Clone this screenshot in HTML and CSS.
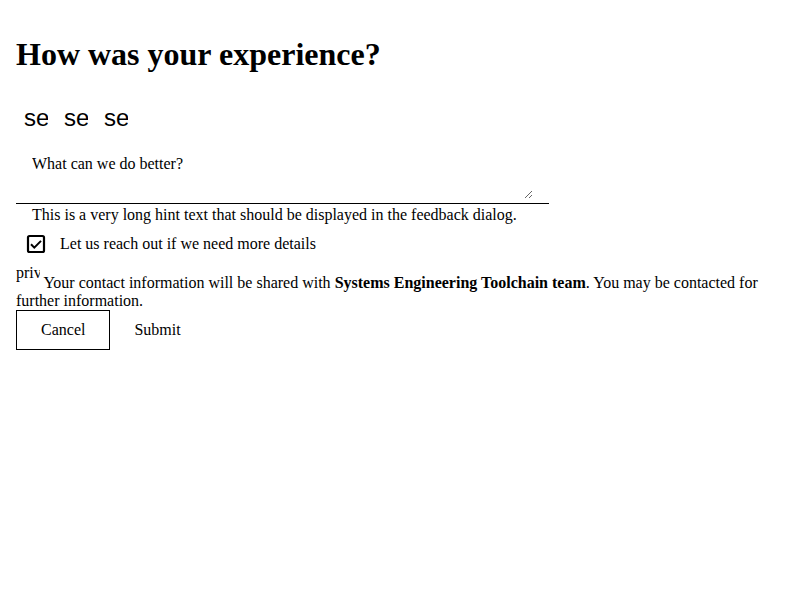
FILE: index.html
```html
<!DOCTYPE html>
<html lang="en">
<head>
<meta charset="utf-8">
<title>Feedback</title>
<link rel="stylesheet" href="styles.css">
</head>
<body>
<div class="dialog">
  <h1 class="title">How was your experience?</h1>
  <div class="rating">
    <button class="icon-btn"><span class="icon">sentiment_dissatisfied</span></button>
    <button class="icon-btn"><span class="icon">sentiment_neutral</span></button>
    <button class="icon-btn"><span class="icon">sentiment_satisfied</span></button>
  </div>
  <div class="field">
    <textarea class="input" placeholder="What can we do better?"></textarea>
  </div>
  <div class="hint">This is a very long hint text that should be displayed in the feedback dialog.</div>
  <label class="check-row">
    <span class="check-btn">
      <svg class="check-icon" viewBox="0 0 24 24" width="24" height="24" aria-hidden="true">
        <rect x="4" y="4" width="16" height="16" rx="1.5" fill="none" stroke="#000" stroke-width="2.2"/>
        <path d="M7 12.3l3.3 3.3 6.7-6.7" fill="none" stroke="#000" stroke-width="2"/>
      </svg>
    </span>
    <span class="check-label">Let us reach out if we need more details</span>
  </label>
  <p class="privacy"><span class="privacy-icon">privacy_tip</span> Your contact information will be shared with <b>Systems Engineering Toolchain team</b>. You may be contacted for further information.</p>
  <div class="actions">
    <button class="btn btn-outline">Cancel</button>
    <button class="btn btn-text">Submit</button>
  </div>
</div>
</body>
</html>
```
FILE: styles.css
```css
html, body {
  margin: 0;
  background: #fff;
  color: #000;
  font-family: "Liberation Serif", "Times New Roman", serif;
  font-size: 16px;
}

.dialog {
  padding: 16px;
}

.title {
  font-size: 32px;
  font-weight: bold;
  margin: 20px 0 23px;
}

.rating {
  display: flex;
}

.icon-btn {
  background: none;
  border: 0;
  padding: 8px;
  margin: 0;
  width: 40px;
  height: 40px;
  display: flex;
  cursor: pointer;
}

.icon {
  display: block;
  width: 24px;
  height: 24px;
  overflow: hidden;
  white-space: nowrap;
  font-family: "Liberation Sans", Arial, sans-serif;
  font-size: 24px;
  line-height: 27px;
  color: #000;
}

.field {
  width: 533px;
  box-sizing: border-box;
  padding: 17px 16px 4px;
  border-bottom: 1px solid #000;
  margin-top: 2px;
}

.input {
  display: block;
  width: 100%;
  height: 44px;
  box-sizing: border-box;
  padding: 0;
  margin: 0;
  border: 0;
  outline: none;
  background: transparent;
  font-family: inherit;
  font-size: 16px;
  color: #000;
}

.input::placeholder {
  color: #000;
  opacity: 1;
}

.hint {
  padding: 2px 16px 0;
}

.check-row {
  display: flex;
  align-items: center;
  gap: 4px;
}

.check-btn {
  display: flex;
  padding: 8px;
}

.check-icon {
  display: block;
}

.privacy {
  margin: 0;
}

.privacy-icon {
  display: inline-block;
  width: 24px;
  height: 24px;
  overflow: hidden;
  white-space: nowrap;
}

.actions {
  display: flex;
}

.btn {
  font-family: inherit;
  font-size: 16px;
  color: #000;
  background: #fff;
  padding: 10px 24px;
  margin: 0;
  line-height: 18px;
  cursor: pointer;
}

.btn-outline {
  border: 1px solid #000;
}

.btn-text {
  border: 1px solid transparent;
  padding-left: 23px;
}
```
